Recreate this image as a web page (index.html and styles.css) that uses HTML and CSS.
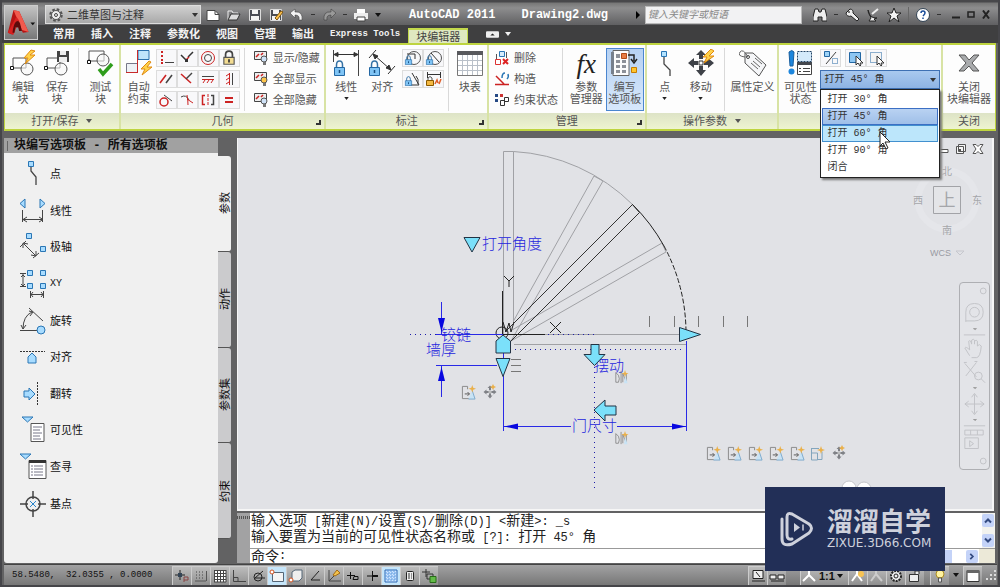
FILE: index.html
```html
<!DOCTYPE html>
<html lang="zh-CN">
<head>
<meta charset="utf-8">
<title>AutoCAD 2011 - Drawing2.dwg</title>
<link rel="stylesheet" href="styles.css">
</head>
<body>
<svg class="sprite" aria-hidden="true">
  <symbol id="down" viewBox="0 0 6 4"><path d="M0 0h6L3 4z" fill="currentColor"/></symbol>
  <symbol id="edit" viewBox="0 0 28 28"><path d="M4 9h13v10H3" fill="none" stroke="#555"/><circle cx="18" cy="20" r="6" fill="#f6f6f6" fill-opacity=".6" stroke="#555"/><path d="M1.500 17.500h3v3h-3z" fill="#fff" stroke="#111"/><path d="M4 9v8" stroke="#555"/><path d="M22 1l-7 8h4l-3 6 10-9h-5l5-4z" fill="#ffd24a" stroke="#e08a10"/></symbol>
  <symbol id="saveb" viewBox="0 0 28 28"><path d="M4 9h13v10H3M4 9v8" fill="none" stroke="#555"/><circle cx="18" cy="20" r="6" fill="#f6f6f6" fill-opacity=".6" stroke="#555"/><path d="M1.500 17.500h3v3h-3z" fill="#fff" stroke="#111"/><path d="M14 2h12v11H14z" fill="#444"/><path d="M17 2h6v4h-6zM16 8h8v5h-8z" fill="#eee"/></symbol>
  <symbol id="test" viewBox="0 0 28 28"><path d="M3 2h15v10H3zM3 10v3" fill="none" stroke="#555"/><circle cx="17" cy="11" r="6" fill="#f6f6f6" fill-opacity=".6" stroke="#555"/><path d="M1.500 11.500h3v3h-3z" fill="#fff" stroke="#111"/><path d="M13 20l4 5 9-10" fill="none" stroke="#2f9d1c" stroke-width="3.500"/></symbol>
  <symbol id="auto" viewBox="0 0 28 28"><path d="M13 1.500h11v9H13z" fill="#bfe4fb" stroke="#2a70ad"/><path d="M1.500 14.500h11v9h-11z" fill="#eef2f6" stroke="#778"/><path d="M12.500 1v23M1 23.500h12" stroke="#c92a2a"/><path d="M24 12l-8 8h4l-3 6 10-8h-5l4-5z" fill="#ffd24a" stroke="#e08a10"/></symbol>
  <symbol id="lock" viewBox="0 0 12 16"><path d="M3 8V5q0-4 3-4t3 4v3" fill="none" stroke="#3572a5" stroke-width="1.500"/><path d="M1 7.500h10v8H1z" fill="#7fc4f5" stroke="#2367a3"/><path d="M6 10v3" stroke="#174e80" stroke-width="1.500"/></symbol>
  <symbol id="glock" viewBox="0 0 14 14"><path d="M4 7V4q0-3 3-3t3 3v3" fill="none" stroke="#444" stroke-width="1.500"/><path d="M2.500 6.500h9v6h-9z" fill="#f3dc92" stroke="#555"/><path d="M7 8v3" stroke="#333" stroke-width="1.500"/></symbol>
  <symbol id="linear" viewBox="0 0 28 28"><path d="M1.500 1v12M26.500 1v26" stroke="#444"/><path d="M2 5.500h24M2 5.500l4-2v4zM26 5.500l-4-2v4z" stroke="#333" fill="#333"/><use href="#lock" x="1" y="11" width="13" height="16"/></symbol>
  <symbol id="aligned" viewBox="0 0 28 28"><path d="M1 9l7-8M20 25l7-8M5 5l18 16M5 5l5 2-3 3zM23 21l-5-2 3-3z" stroke="#333" fill="#333"/><use href="#lock" y="11" width="13" height="16"/></symbol>
  <symbol id="table" viewBox="0 0 28 28"><path d="M1.500 2.500h25v24h-25z" fill="#fff" stroke="#777"/><path d="M1 2h26v4H1z" fill="#58595d"/><path d="M6.500 6v20M11.500 6v20M16.500 6v20M21.500 6v20M2 11.500h24M2 16.500h24M2 21.500h24" stroke="#b9c0c9"/></symbol>
  <symbol id="palette" viewBox="0 0 28 28"><path d="M2 1.500h16v25H2z" fill="#fcfcfc" stroke="#666"/><path d="M0 3h3v22H0z" fill="#77808c"/><path d="M5 5h4v4H5zM5 11h4v3H5zM11 11h4v3h-4zM5 16h4v3H5zM11 16h4v3h-4zM5 21h4v3H5zM11 21h4v3h-4z" fill="#8d9199"/><path d="M10.500 4.500h5v5h-5z" fill="#e77c43" stroke="#b34915"/><path d="M17 6h6v6M20 10l3 4 3-4" fill="none" stroke="#222" stroke-width="1.500"/><path d="M20.500 18.500h5v5h-5z" fill="#ffc52d" stroke="#c67c00"/></symbol>
  <symbol id="point" viewBox="0 0 28 28"><path d="M13 7v8l6 6v6" fill="none" stroke="#444" stroke-width="1.300"/><path d="M10.500 2.500h5v5h-5z" fill="#b5e4ff" stroke="#2a76b5"/></symbol>
  <symbol id="move" viewBox="0 0 28 28"><path d="M14 1l5 5h-3v4h-4V6H9zM14 27l5-6h-3v-4h-4v4H9zM1 14l6-5v3h4v4H7v3zM27 14l-6-5v3h-4v4h4v3z" fill="#3f4248"/><path d="M12 12h4v4h-4z" fill="#fff" stroke="#333"/></symbol>
  <symbol id="movebolt" viewBox="0 0 28 28"><use href="#move"/><path d="M24 0l-8 8h4l-3 6 10-7h-5l5-5z" fill="#ffd24a" stroke="#e08a10"/></symbol>
  <symbol id="tag" viewBox="0 0 28 28"><path d="M6 4l8 0 13 12-7 11L6 14z" fill="#f5f6f8" stroke="#555"/><circle cx="9" cy="8" r="1.500" fill="#fff" stroke="#444"/><path d="M9 8Q4-1 1 3t5 5M12 14l7 6M14 12l7 6M16 9l7 6" fill="none" stroke="#666"/></symbol>
  <symbol id="vis" viewBox="0 0 28 28"><path d="M3 3q3-3 5 0L7 17H4z" fill="#1d86dd" stroke="#1a5f9e"/><circle cx="5.500" cy="22.500" r="3" fill="#1d86dd"/><path d="M11.500 2.500h14v10h-14z" fill="#d4eafb" stroke="#246" stroke-dasharray="2 1"/><path d="M11.500 13.500h14v12h-14z" fill="#fff" stroke="#444"/><path d="M11 13h15v3H11z" fill="#44474d"/><path d="M13 19.500h2M17 19.500h7M13 22.500h2M17 22.500h7" stroke="#444"/></symbol>
  <symbol id="closebig" viewBox="0 0 28 28"><path d="M4 6h6l4 5 5-5h5l-7 8 7 8h-6l-4-5-5 5H4l7-8z" fill="#a9abad" stroke="#555"/></symbol>
  <symbol id="c1" viewBox="0 0 16 16"><path d="M3 1h2v2H3zM3 5h2v2H3zM3 9h2v2H3zM3 12h2v2H3z" fill="#c22"/><path d="M7 12.500h9" stroke="#444"/></symbol>
  <symbol id="c2" viewBox="0 0 16 16"><path d="M2 5l5 5M9 7l5-5" stroke="#333" stroke-width="1.500"/><path d="M7 10l3-3" stroke="#c22" stroke-width="1.500"/><path d="M6 9h3v3H6z" fill="#333"/></symbol>
  <symbol id="c3" viewBox="0 0 16 16"><circle cx="8" cy="8" r="6.500" fill="none" stroke="#c22"/><circle cx="8" cy="8" r="3.500" fill="none" stroke="#444"/></symbol>
  <symbol id="c4" viewBox="0 0 16 16"><path d="M2 12l6-8" stroke="#c22" stroke-width="1.500"/><path d="M8 12l6-8" stroke="#444" stroke-width="1.500"/></symbol>
  <symbol id="c5" viewBox="0 0 16 16"><path d="M2 3l10 9" stroke="#c22" stroke-width="1.500"/><path d="M7 8l6-6" stroke="#444" stroke-width="1.500"/></symbol>
  <symbol id="c6" viewBox="0 0 16 16"><path d="M2 5.500h12" stroke="#444"/><path d="M2 8.500h12M3 12l2-3M7 12l2-3M11 12l2-3" stroke="#c22"/></symbol>
  <symbol id="c7" viewBox="0 0 16 16"><path d="M11.500 2v12" stroke="#444"/><path d="M8.500 2v12M5 5l3-2M5 9l3-2M5 13l3-2" stroke="#c22"/></symbol>
  <symbol id="c8" viewBox="0 0 16 16"><circle cx="6" cy="10" r="4" fill="none" stroke="#c22" stroke-width="1.500"/><path d="M6 3l8 6" stroke="#444"/></symbol>
  <symbol id="c9" viewBox="0 0 16 16"><path d="M2 5q5-3 8 3" fill="none" stroke="#444"/><path d="M8 3q1 5 1 10M8 7l6 4" fill="none" stroke="#c22"/></symbol>
  <symbol id="c10" viewBox="0 0 16 16"><path d="M5 3.500H2.500v9H5" fill="none" stroke="#c22" stroke-width="1.500"/><path d="M11 3.500h2.500v9H11" fill="none" stroke="#444" stroke-width="1.500"/><path d="M8 2v12" stroke="#c22" stroke-dasharray="3 1"/></symbol>
  <symbol id="c11" viewBox="0 0 16 16"><path d="M4 6h8M4 10h8" stroke="#c22" stroke-width="2"/></symbol>
  <symbol id="show" viewBox="0 0 16 16"><path d="M1.500 1.500h12v8h-12z" fill="#eee" stroke="#444"/><path d="M3 7l3-3M8 5l2-2" stroke="#c22" stroke-width="1.500"/><circle cx="11" cy="9" r="3" fill="var(--bulb)" stroke="#555"/><path d="M10 12h3v3h-3z" fill="#777"/></symbol>
  <symbol id="d1" viewBox="0 0 18 16"><path d="M3 4h8v5" fill="none" stroke="#333"/><circle cx="10" cy="8" r="6.500" fill="none" stroke="#555"/><use href="#lock" y="5" width="9" height="10"/></symbol>
  <symbol id="d2" viewBox="0 0 18 16"><circle cx="10" cy="8" r="6.500" fill="none" stroke="#555"/><path d="M6 3l8 9" stroke="#333"/><use href="#lock" y="5" width="9" height="10"/></symbol>
  <symbol id="d3" viewBox="0 0 18 16"><path d="M5 14h10L8 2M12 5q3 3 2 8" fill="none" stroke="#333"/><use href="#lock" y="5" width="9" height="10"/></symbol>
  <symbol id="d4" viewBox="0 0 18 16"><path d="M2.500 1v6M15.500 1v6M2 3.500h13" stroke="#333"/><path d="M3 9V7q2-3 4 0v2" fill="none" stroke="#555"/><path d="M1.500 9.500h7v5h-7z" fill="#f4b942" stroke="#8a5a00"/><path d="M10 13l2-4 1 3M16 8l-2 5" fill="none" stroke="#e0602a" stroke-width="1.500"/></symbol>
  <symbol id="m1" viewBox="0 0 16 16"><path d="M1.500 9.500h5v5h-5z" fill="#fff" stroke="#d33"/><path d="M5.500 1.500h5v5h-5z" fill="#d5ecfb" stroke="#2a76b5"/><path d="M2.500 4v5M12.500 2v6" stroke="#555"/><path d="M9 9l5 5M14 9l-5 5" stroke="#d22" stroke-width="2"/></symbol>
  <symbol id="m2" viewBox="0 0 16 16"><path d="M2 5l8 8M1 13.500h14" stroke="#c22" stroke-width="1.500"/><path d="M8 7q0-5 3-5M14 3q1 3-1 5" fill="none" stroke="#2a76b5" stroke-width="1.500"/></symbol>
  <symbol id="m3" viewBox="0 0 16 16"><path d="M1 2h3v3H1zM1 7h3v3H1z" fill="#264a85"/><path d="M6 2h3v3H6z" fill="#c33"/><path d="M6.500 8.500h4v5h-4zM10.500 5.500h4v4h-4z" fill="#fff" stroke="#333"/></symbol>
  <symbol id="v1" viewBox="0 0 18 16"><path d="M2.500 1.500h5v5h-5z" fill="#9fd4f8" stroke="#2367a3"/><path d="M4 14L14 2" stroke="#444"/><path d="M10.500 8.500h5v5h-5z" fill="none" stroke="#2367a3" stroke-dasharray="1 1"/></symbol>
  <symbol id="v2" viewBox="0 0 18 16"><path d="M2.500 2.500h11v10h-11z" fill="var(--sel)" stroke="#2367a3" stroke-dasharray="var(--dash)"/><path d="M9 6v9l2-2 2 3 1-1-1-2h3z" fill="#fff" stroke="#333"/></symbol>
  <symbol id="newf" viewBox="0 0 14 14"><path d="M1 2.500h8l4 4v6H1z" fill="#fff" stroke="#444"/><path d="M9 2.500v4h4" fill="none" stroke="#444"/></symbol>
  <symbol id="openf" viewBox="0 0 14 14"><path d="M1 12V3h4l1 2h5v2" fill="none" stroke="#eee"/><path d="M1 12l3-6h9l-3 6z" fill="#ddd" stroke="#333"/></symbol>
  <symbol id="savef" viewBox="0 0 14 14"><path d="M1.500 1.500h11v11h-11z" fill="#4a4d55" stroke="#ddd"/><path d="M4 2h6v4H4zM3 8h8v4H3z" fill="#f4f4f4"/></symbol>
  <symbol id="saveas" viewBox="0 0 14 14"><use href="#savef"/><path d="M6 10l6-7 2 1-6 8z" fill="#ffc34d" stroke="#7a5210"/></symbol>
  <symbol id="undo" viewBox="0 0 14 14"><path d="M0 5l5-4v3q8-1 7 8h-3q1-5-4-5v3z" fill="currentColor" stroke="#333" stroke-width=".5"/></symbol>
  <symbol id="print" viewBox="0 0 14 14"><path d="M3 1h8v4H3z" fill="#fff"/><path d="M0 5h14v6H0z" fill="#eee"/><path d="M3 9h8v4H3z" fill="#fff" stroke="#444"/></symbol>
  <symbol id="page" viewBox="0 0 16 16"><path d="M7 1.500H1.500v13H9M7 1.500v3" fill="none" stroke="#888"/><path d="M4 9.500h5M7 7.500l2 2-2 2" fill="none" stroke="#555"/><path d="M12 6l3 9H8" fill="#c8e3f5" stroke="#7ba9cc"/><path d="M12 0l1 3 3 1-3 1-1 3-1-3-3-1 3-1z" fill="#eab04a"/></symbol>
  <symbol id="flip" viewBox="0 0 16 16"><path d="M1.500 3v11h3q2-4 0-8zM7.500 1v14M9.500 14V4l4 10V4" fill="none" stroke="#888"/><path d="M12 6l3 9h-4z" fill="#c8e3f5"/><path d="M12 0l1 3 3 1-3 1-1 3-1-3-3-1 3-1z" fill="#eab04a"/></symbol>
</svg>

<div class="app">
  <header class="head">
    <button class="logo" aria-label="应用程序菜单">
      <svg viewBox="0 0 34 34"><path d="M3 28L9 4l6 1 10 22-6 1-3-6H10l-2 8z" fill="#b81313"/><path d="M9 4l6 1 10 22-7-2-6-14z" fill="#f15a4e"/><path d="M3 28l9-17 3 4-6 15z" fill="#d82020"/><path d="M8 28q1-10 4-12t4 2l2 8h-3l-1-4h-3l-1 6z" fill="#5d0b0b"/><path d="M27 17h5l-2.500 3z" fill="#111"/></svg>
    </button>
    <div class="title">
      <label class="workspace" aria-label="工作空间">
        <svg viewBox="0 0 16 16"><circle cx="8" cy="8" r="5.500" fill="none" stroke="#555" stroke-width="2.500" stroke-dasharray="2.500 1.820"/><circle cx="8" cy="8" r="4.500" fill="#eee" stroke="#555"/><circle cx="8" cy="8" r="1.500" fill="none" stroke="#444"/></svg>
        <select><option>二维草图与注释</option></select>
        <svg class="tri"><use href="#down"/></svg>
      </label>
      <div class="quick">
        <button aria-label="新建"><svg><use href="#newf"/></svg></button>
        <button aria-label="打开"><svg><use href="#openf"/></svg></button>
        <button aria-label="保存"><svg><use href="#savef"/></svg></button>
        <button aria-label="另存为"><svg><use href="#saveas"/></svg></button>
        <button aria-label="放弃"><svg><use href="#undo"/></svg></button>
        <i class="dash"></i>
        <button class="redo" aria-label="重做"><svg><use href="#undo"/></svg></button>
        <i class="dash"></i>
        <button aria-label="打印"><svg><use href="#print"/></svg></button>
        <svg class="tri"><use href="#down"/></svg>
      </div>
      <h1><span>AutoCAD 2011</span><span>Drawing2.dwg</span></h1>
      <svg class="more" viewBox="0 0 4 8"><path d="M0 0l4 4-4 4z"/></svg>
      <input class="search" type="text" placeholder="键入关键字或短语" aria-label="搜索">
      <div class="info">
        <button aria-label="搜索"><svg viewBox="0 0 14 14"><path d="M2 1h3l1 3h2l1-3h3l2 8v4H9V9H5v4H0V9z" fill="#eee" stroke="#222"/></svg></button>
        <i class="dash"></i>
        <button aria-label="速博应用中心"><svg viewBox="0 0 14 14"><path d="M5 1a3.500 3.500 0 0 1 3 4l6 6-2 2-6-5a3.500 3.500 0 0 1-5-3z" fill="#eee" stroke="#222"/><circle cx="4" cy="4" r="1" fill="#555"/></svg></button>
        <button aria-label="通讯中心"><svg viewBox="0 0 14 14"><path d="M2 2q0 8 9 8l-3 1 2 2H3l2-3z" fill="#eee" stroke="#222"/><path d="M6 6l6-5" stroke="#eee" stroke-width="2"/></svg></button>
        <button aria-label="收藏夹"><svg viewBox="0 0 14 14"><path d="M7 0l2 5h5l-4 3 2 6-5-4-5 4 2-6-4-3h5z" fill="#f4f4f4" stroke="#222"/></svg></button>
        <i class="bar"></i>
        <button aria-label="帮助"><svg viewBox="0 0 14 14"><circle cx="7" cy="7" r="6.500" fill="#fff" stroke="#345"/><path d="M5 5q0-2 2-2t2 2q0 1-2 3M7 9.500v1.500" fill="none" stroke="#1a4d9a" stroke-width="1.500"/></svg></button>
        <i class="dash"></i>
      </div>
      <div class="win">
        <button aria-label="最小化"><svg viewBox="0 0 8 8"><path d="M0 7h8" stroke="#222" stroke-width="2"/></svg></button>
        <button aria-label="最大化"><svg viewBox="0 0 8 8"><path d="M1 1.500h6v5H1z" fill="none" stroke="#222" stroke-width="1.500"/></svg></button>
        <button aria-label="关闭"><svg viewBox="0 0 8 8"><path d="M1 0l6 8M7 0L1 8" stroke="#222" stroke-width="2"/></svg></button>
      </div>
    </div>
    <nav class="tabs">
      <button>常用</button><button>插入</button><button>注释</button><button>参数化</button><button>视图</button><button>管理</button><button>输出</button><button class="latin">Express Tools</button><button class="on">块编辑器</button>
      <button class="pill" aria-label="最小化功能区"><svg viewBox="0 0 12 6"><rect width="12" height="6" rx="1" fill="#eee"/><path d="M4 4l2-2 2 2z" fill="#222"/></svg></button>
      <svg class="tri"><use href="#down"/></svg>
    </nav>
  </header>

  <section class="ribbon">
    <div class="panel">
      <div class="tools">
        <button class="big"><svg><use href="#edit"/></svg>编辑<br>块</button>
        <button class="big"><svg><use href="#saveb"/></svg>保存<br>块</button>
        <i class="sep"></i>
        <button class="big full"><svg><use href="#test"/></svg>测试<br>块</button>
      </div>
      <h2>打开/保存 <svg class="tri"><use href="#down"/></svg></h2>
    </div>
    <div class="panel">
      <div class="tools">
        <button class="big"><svg><use href="#auto"/></svg>自动<br>约束</button>
        <div class="cells four">
          <button aria-label="重合"><svg><use href="#c1"/></svg></button><button aria-label="共线"><svg><use href="#c2"/></svg></button><button aria-label="同心"><svg><use href="#c3"/></svg></button><button aria-label="固定"><svg><use href="#glock"/></svg></button>
          <button aria-label="平行"><svg><use href="#c4"/></svg></button><button aria-label="垂直"><svg><use href="#c5"/></svg></button><button aria-label="水平"><svg><use href="#c6"/></svg></button><button aria-label="竖直"><svg><use href="#c7"/></svg></button>
          <button aria-label="相切"><svg><use href="#c8"/></svg></button><button aria-label="平滑"><svg><use href="#c9"/></svg></button><button aria-label="对称"><svg><use href="#c10"/></svg></button><button aria-label="相等"><svg><use href="#c11"/></svg></button>
        </div>
        <i class="sep"></i>
        <div class="rows">
          <button class="b1"><svg><use href="#show"/></svg>显示/隐藏</button>
          <button class="b2"><svg><use href="#show"/></svg>全部显示</button>
          <button class="b3"><svg><use href="#show"/></svg>全部隐藏</button>
        </div>
      </div>
      <h2>几何</h2><button class="launch" aria-label="约束设置"></button>
    </div>
    <div class="panel">
      <div class="tools">
        <button class="big wide"><svg><use href="#linear"/></svg>线性<svg class="tri"><use href="#down"/></svg></button>
        <button class="big"><svg><use href="#aligned"/></svg>对齐</button>
        <div class="cells two">
          <button aria-label="半径"><svg><use href="#d1"/></svg></button><button aria-label="直径"><svg><use href="#d2"/></svg></button>
          <button aria-label="角度"><svg><use href="#d3"/></svg></button><button aria-label="转换"><svg><use href="#d4"/></svg></button>
        </div>
        <i class="sep"></i>
        <button class="big full"><svg><use href="#table"/></svg>块表</button>
      </div>
      <h2>标注</h2><button class="launch" aria-label="标注设置"></button>
    </div>
    <div class="panel">
      <div class="tools">
        <div class="rows">
          <button><svg><use href="#m1"/></svg>删除</button>
          <button><svg><use href="#m2"/></svg>构造</button>
          <button><svg><use href="#m3"/></svg>约束状态</button>
        </div>
        <i class="sep"></i>
        <button class="big full"><span class="fx">fx</span>参数<br>管理器</button>
        <button class="big wide pressed"><svg><use href="#palette"/></svg>编写<br>选项板</button>
      </div>
      <h2>管理</h2><button class="launch" aria-label="管理设置"></button>
    </div>
    <div class="panel">
      <div class="tools">
        <button class="big"><svg><use href="#point"/></svg>点<svg class="tri"><use href="#down"/></svg></button>
        <button class="big wide"><svg><use href="#movebolt"/></svg>移动<svg class="tri"><use href="#down"/></svg></button>
        <i class="sep"></i>
        <button class="big full"><svg><use href="#tag"/></svg>属性定义</button>
      </div>
      <h2>操作参数 <svg class="tri"><use href="#down"/></svg></h2>
    </div>
    <div class="panel">
      <div class="tools">
        <button class="big wider"><svg><use href="#vis"/></svg>可见性<br>状态</button>
        <div class="states">
          <div class="modes">
            <button aria-label="可见性模式"><svg><use href="#v1"/></svg></button>
            <span class="pair"><button class="fill" aria-label="使可见"><svg><use href="#v2"/></svg></button><button class="dotted" aria-label="使不可见"><svg><use href="#v2"/></svg></button></span>
          </div>
          <div class="combo">
            <select aria-label="可见性状态"><option>打开 45° 角</option></select>
            <svg class="tri"><use href="#down"/></svg>
            <ul class="menu" role="listbox" aria-label="可见性状态">
              <li role="option">打开 30° 角</li>
              <li role="option" class="cur" aria-selected="true">打开 45° 角</li>
              <li role="option" class="hot">打开 60° 角</li>
              <li role="option">打开 90° 角</li>
              <li role="option">闭合</li>
            </ul>
            <svg class="pointer" viewBox="0 0 12 19"><path d="M1 1v14l3-3 3 6 2-1-3-6h5z" fill="#fff" stroke="#222"/></svg>
          </div>
        </div>
      </div>
      <h2></h2>
    </div>
    <div class="panel">
      <div class="tools">
        <button class="big full"><svg><use href="#closebig"/></svg>关闭<br>块编辑器</button>
      </div>
      <h2>关闭</h2>
    </div>
  </section>

  <main class="work">
    <aside class="side">
      <h2>块编写选项板<span> - </span>所有选项板</h2>
      <ul class="items">
        <li><button><svg viewBox="0 0 28 28"><path d="M12 7v4l5 6v8" fill="none" stroke="#444" stroke-width="1.300"/><path d="M9.500 1.500h5v5h-5z" fill="#a8dcff" stroke="#2a76b5"/></svg>点</button></li>
        <li><button><svg viewBox="0 0 28 28"><path d="M6 2v9L1 6.500zM21 2v9l5-4.500z" fill="#a8dcff" stroke="#2a76b5"/><path d="M3.500 13v12M23.500 13v12M4 22.500h20M8 20l-4 2.500L8 25M20 20l4 2.500-4 2.500" fill="none" stroke="#444"/></svg>线性</button></li>
        <li><button><svg viewBox="0 0 28 28"><path d="M7.500.5h5v5h-5zM21.500 13.500h5v5h-5z" fill="#a8dcff" stroke="#2a76b5"/><path d="M1 14l6-6M14 25l6-5M4 10l13 13M4 10v5M4 10l5 1M17 23v-5M17 23l-5-1" fill="none" stroke="#444"/></svg>极轴</button></li>
        <li><button><svg viewBox="0 0 28 28"><path d="M8.500.5h5v5h-5zM21.500.5h5v5h-5zM8.500 13.500h5v5h-5zM21.500 13.500h5v5h-5z" fill="#a8dcff" stroke="#2a76b5"/><path d="M1 3.500h6M1 16.500h6M4 4v12M2 7l2-2 2 2M2 14l2 2 2-2M11.500 21v7M24.500 21v7M12 24.500h12M14 22l-2 2.500 2 2.500M22 22l2 2.500-2 2.500" fill="none" stroke="#444"/></svg><span class="latin">XY</span></button></li>
        <li><button><svg viewBox="0 0 28 28"><path d="M1 23.500h20M10 1l14 13M4 22Q4 9 13 5M2 18l2 4 3-4M10 4l4 1-3 4" fill="none" stroke="#444"/><circle cx="22" cy="23" r="4" fill="#a8dcff" stroke="#2a76b5"/></svg>旋转</button></li>
        <li><button><svg viewBox="0 0 28 28"><path d="M1 8.500h25" stroke="#333" stroke-dasharray="2 1"/><path d="M9 20v-6l4-4 4 4v6z" fill="#a8dcff" stroke="#2a76b5"/></svg>对齐</button></li>
        <li><button><svg viewBox="0 0 28 28"><path d="M5 11h5V8l6 6-6 6v-3H5z" fill="#a8dcff" stroke="#2a76b5"/><path d="M18.500 2v24" stroke="#333" stroke-dasharray="2 1"/></svg>翻转</button></li>
        <li><button><svg viewBox="0 0 28 28"><path d="M3 1h11L8.500 6z" fill="#a8dcff" stroke="#2a76b5"/><path d="M12 7.500h13v18H12z" fill="#fff" stroke="#555"/><path d="M14 11h9M14 14h7M14 17h9M14 20h7M14 23h8" stroke="#778"/></svg>可见性</button></li>
        <li><button><svg viewBox="0 0 28 28"><path d="M1 1h11L6.500 6z" fill="#a8dcff" stroke="#2a76b5"/><path d="M10 7.500h17v18H10z" fill="#fff" stroke="#555"/><path d="M10 7h17v3H10z" fill="#333"/><path d="M12 13h2M15 13h9M12 16h2M15 16h9M12 19h2M15 19h9M12 22h2M15 22h9" stroke="#778"/></svg>查寻</button></li>
        <li><button><svg viewBox="0 0 28 28"><path d="M14 1v8M14 19v8M1 14h8M19 14h8" stroke="#444" stroke-width="1.500"/><circle cx="14" cy="14" r="7" fill="none" stroke="#444" stroke-width="1.500"/><path d="M11 11l6 6M17 11l-6 6" stroke="#2a86cc"/></svg>基点</button></li>
      </ul>
    </aside>
    <div class="vtabs">
      <button class="on"><span>参数</span></button><button><span>动作</span></button><button><span>参数集</span></button><button><span>约束</span></button>
    </div>
    <div class="center">
      <section class="canvas">
        <svg class="drawing" viewBox="238 138 754 368" preserveAspectRatio="xMinYMin meet">
          <g fill="none" stroke="#a0a1a5">
            <path d="M503.500 334V151.500h10V325M513.500 151.500A183 183 0 0 1 633 205M513.500 321L594 176l9 5-92 160M512 330l150-87 4 9-155 89M503 334.500h183M514 344.500h172"/>
            <path d="M649.500 316v11M674.500 316v11M698.500 316v11M723.500 316v11M747.500 316v11M511 359.500h10M511 365.500h10M511 371.500h10" stroke="#777"/>
            <path d="M505 332L632.500 204.500l7 8L510 342" stroke="#333"/>
            <path d="M632.500 204.500A183 183 0 0 1 664 246" stroke="#222"/>
            <path d="M664 246A183 183 0 0 1 686 334" stroke="#222" stroke-dasharray="5 2"/>
            <path d="M502.500 291v43.500h42.500M504 276l5 5 5-5M509 281v6M550 322l11 11M561 322l-11 11M503 322l3 10 3-9 2 9 3-10" stroke="#222"/>
            <circle cx="502" cy="333" r="6" stroke="#222"/>
            <path d="M410 334.500h26M548 334.500h46M515 349.500h168M594.500 367v122" stroke="#1c1ca8" stroke-dasharray="1 4"/>
            <path d="M441.500 302v32M436 334.500h67M436 365.500h61M441.500 365v32M503.500 345v86M686.500 341v90M503 426.500h68M617 426.500h69" stroke="#2929e6"/>
          </g>
          <path d="M438 318h7l-3.500 14zM438 381h7l-3.500-14zM504 426.500l14-3v6zM686 426.500l-14-3v6z" fill="#0808e0"/>
          <g class="cad-text"><text x="482" y="249">打开角度</text><text x="441" y="340">铰链</text><text x="426" y="355">墙厚</text><text x="572" y="431">门尺寸</text><text x="594" y="371">摆动</text></g>
          <path d="M464 237.500h16l-8 14.500zM496 353v-12l7-6 7.500 6v12zM496 358.500h14l-7 18zM679.500 327.500l21 7-21 7zM591 344.500h8v10h6l-10.500 11-10.500-11h7zM594 410l11-10v6h11v9h-11v6z" fill="#7be0fa" stroke="#234"/>
          <use href="#page" x="461" y="385" width="15" height="15"/>
          <use href="#move" class="faint" x="483" y="385" width="14" height="14"/><path d="M493 384l1 2 2 1-2 1-1 2-1-2-2-1 2-1z" fill="#eab04a"/>
          <use href="#flip" x="614" y="370" width="15" height="14"/><use href="#flip" x="614" y="431" width="15" height="14"/>
          <use href="#page" x="706" y="446" width="15" height="15"/><use href="#page" x="727" y="446" width="15" height="15"/><use href="#page" x="748" y="446" width="15" height="15"/><use href="#page" x="769" y="446" width="15" height="15"/><use href="#page" x="790" y="446" width="15" height="15"/>
          <path d="M811 448.500h8M811.500 448v12h6v-7h-6M818 459.500h4v-8" fill="none" stroke="#83a5bd"/><path d="M821 446l1 3 3 1-3 1-1 3-1-3-3-1 3-1z" fill="#eab04a"/>
          <use href="#move" class="faint" x="832" y="446" width="14" height="14"/><path d="M842 445l1 2 2 1-2 1-1 2-1-2-2-1 2-1z" fill="#eab04a"/>
        </svg>
        <div class="doc">
          <button aria-label="最小化"><svg viewBox="0 0 12 12"><path d="M1 6.500h9v3H1z" fill="#fff" stroke="#555"/></svg></button>
          <button aria-label="还原"><svg viewBox="0 0 12 12"><path d="M3.500 1.500h7v7h-7zM1.500 3.500h7v7h-7z" fill="#f6f6f6" stroke="#555"/><path d="M4 6h2v2H4z" fill="#555"/></svg></button>
          <button aria-label="关闭"><svg viewBox="0 0 12 12"><path d="M1 1.500h3l2 2 2-2h3L8 6l3 4.500H8l-2-2-2 2H1L4 6z" fill="#fff" stroke="#555"/></svg></button>
        </div>
        <div class="cube">
          <svg viewBox="0 0 74 96" aria-label="ViewCube"><circle cx="36" cy="37" r="29" fill="none" stroke="#e5e6ea" stroke-width="7"/><path d="M22.500 23.500h27v27h-27z" fill="#e4e5e8" stroke="#a2a3a7"/><g fill="#a5a6aa" text-anchor="middle" font-size="10"><text x="36" y="12">北</text><text x="7" y="41">西</text><text x="66" y="41">东</text><text x="36" y="71">南</text><text x="36" y="43" font-size="17">上</text></g><text x="19" y="93" class="wcs">WCS</text><path d="M45 88h8l-4 4z" fill="none" stroke="#c6c7cd"/></svg>
        </div>
        <div class="navbar">
          <svg viewBox="0 0 30 188" fill="none" stroke="#c2c3c7"><circle cx="24" cy="6" r="3"/><path d="M6 38V28q0-9 9-9t9 9-9 9H6"/><circle cx="15" cy="28" r="5"/><path d="M4 51.500h22M10 73l-5-8q1-2 5 2l-1-9q2-2 3 3V57q2-2 3 0v4-3q2-2 3 0v5q2-3 4 0-1 12-5 12h-5M5 81l12 14M17 80L6 94"/><circle cx="19" cy="94" r="4"/><path d="M22 97l4 4M4 80h3M15 79h3M15 113v20M6 123h18M12 116l3-4 3 4M12 130l3 4 3-4M9 120l-4 3 4 3M21 120l4 3-4 3M4 145.500h22M5 150h19v5H5zM11 150v5M18 150v5M5 158h14v11H5zM10 161l4 3-4 3z"/><circle cx="24" cy="182" r="3"/><path d="M14 45h3l-1 1zM14 106h3l-1 1zM14 139h3l-1 1z" stroke="#999"/></svg>
        </div>
        <svg class="bubbles" viewBox="0 0 32 16"><circle cx="8" cy="9" r="7" fill="#fff" stroke="#c5c6ca"/><circle cx="23" cy="10" r="7" fill="#fff" stroke="#c5c6ca"/></svg>
      </section>
      <section class="command">
        <div class="handle"></div>
        <div class="log">
          <p>输入选项<span> [</span>新建<span>(N)/</span>设置<span>(S)/</span>删除<span>(D)] &lt;</span>新建<span>&gt;: _s</span></p>
          <p>输入要置为当前的可见性状态名称或<span> [?]: </span>打开<span> 45° </span>角</p>
        </div>
        <div class="vscroll"><button aria-label="向上"><svg viewBox="0 0 8 6"><path d="M1 5l3-3 3 3"/></svg></button><button aria-label="向下"><svg viewBox="0 0 8 6"><path d="M1 1l3 3 3-3"/></svg></button></div>
        <label class="prompt">命令<span>:</span><input type="text" aria-label="命令行"></label>
        <div class="hscroll"><i></i><button aria-label="向右"><svg viewBox="0 0 6 8"><path d="M1 1l3 3-3 3"/></svg></button></div>
      </section>
    </div>
  </main>

  <footer class="status">
    <output>58.5480,&nbsp; 32.0355 , 0.0000</output>
    <div class="toggles">
      <button aria-label="推断约束"><svg viewBox="0 0 16 16"><path d="M1 7h10M6 2v10" stroke="#222"/><path d="M4 5h4v4H4z" fill="#345"/><path d="M10 14V9h4v3h-4" fill="none" stroke="#844"/></svg></button>
      <button aria-label="捕捉"><svg viewBox="0 0 16 16"><path d="M3 4h8M3 7h8M3 10h8" stroke="#444" stroke-dasharray="1 2"/><path d="M2 13h11M13.500 3v10" stroke="#555"/></svg></button>
      <button aria-label="栅格"><svg viewBox="0 0 16 16"><path d="M2 2h12v12H2z" fill="#fff"/><path d="M2.500 2v12M5.500 2v12M8.500 2v12M11.500 2v12M14 2v12M2 2.500h12M2 5.500h12M2 8.500h12M2 11.500h12M2 14h12" stroke="#444"/></svg></button>
      <button aria-label="正交"><svg viewBox="0 0 16 16"><path d="M2.500 2v11.500H15M2 9.500h5V13" fill="none" stroke="#444"/></svg></button>
      <button aria-label="极轴"><svg viewBox="0 0 16 16"><path d="M13 3L5 10h10" fill="none" stroke="#222"/><circle cx="8" cy="9" r="4" fill="none" stroke="#222"/></svg></button>
      <button class="on" aria-label="对象捕捉"><svg viewBox="0 0 16 16"><path d="M3.500 4.500h11v9h-11z" fill="#f4f4f4" stroke="#567"/><circle cx="3" cy="4" r="2" fill="#fff" stroke="#d4511e"/></svg></button>
      <button aria-label="三维对象捕捉"><svg viewBox="0 0 16 16"><path d="M4 4l3-2h7v8l-3 3H4z" fill="#eee" stroke="#567"/><circle cx="3" cy="12" r="2" fill="#fff" stroke="#d4511e"/></svg></button>
      <button aria-label="对象追踪"><svg viewBox="0 0 16 16"><path d="M12 3L4 12h9" fill="none" stroke="#222"/></svg></button>
      <button aria-label="动态 UCS"><svg viewBox="0 0 16 16"><path d="M3 2v11h12M3 13l6-6" fill="none" stroke="#444"/><path d="M7 7l4-5 3 3-5 3z" fill="#f3c24d" stroke="#a36b12"/></svg></button>
      <button aria-label="动态输入"><svg viewBox="0 0 16 16"><path d="M2 7.500h8M5.500 4v7M9 8.500h4v3H8z" fill="none" stroke="#111"/></svg></button>
      <button aria-label="线宽"><svg viewBox="0 0 16 16"><path d="M8 8h6" stroke="#111" stroke-width="2"/><path d="M3 8h6M8.500 3v10" stroke="#111"/></svg></button>
      <button class="on" aria-label="透明度"><svg viewBox="0 0 16 16"><path d="M2 2h12v12H2z" fill="#cfe6ff" stroke="#2c68b4"/><path d="M2 5h12M2 8h12M2 11h12M5 2v12M8 2v12M11 2v12" stroke="#5f9be0" stroke-dasharray="2 1"/></svg></button>
      <button aria-label="快捷特性"><svg viewBox="0 0 16 16"><rect x="4.500" y="3.500" width="7" height="9" rx="1" fill="#eee" stroke="#222"/><path d="M6 6h4M6 8h4M6 10h4" stroke="#333" stroke-dasharray="2 1"/></svg></button>
      <button aria-label="选择循环"><svg viewBox="0 0 16 16"><path d="M1 4h8M5 1v8M6 6h6v5H6z" fill="none" stroke="#333"/><path d="M9 8.500h6v6H9z" fill="#62bb48" stroke="#286b19"/></svg></button>
    </div>
    <div class="right">
      <button aria-label="模型"><svg viewBox="0 0 16 16"><path d="M3 2.500h10v8H3z" fill="#eee" stroke="#222"/><path d="M2 13h13M6 4l4 5" stroke="#222"/></svg></button>
      <button aria-label="布局"><svg viewBox="0 0 16 16"><path d="M1 7h6v4H1zM9 7h6v4H9z" fill="#eee" stroke="#222"/><path d="M2 13h13" stroke="#222"/></svg></button>
      <button class="scale"><svg viewBox="0 0 16 16"><path d="M8 2v5l-6 6M8 7l6 6" fill="none" stroke="#fff" stroke-width="2"/></svg>1:1<svg class="tri"><use href="#down"/></svg></button>
      <button aria-label="注释可见性"><svg viewBox="0 0 16 16"><path d="M7 2v4l-5 7M7 6l5 7" fill="none" stroke="#fff" stroke-width="2"/><circle cx="11" cy="6" r="3" fill="#f7c353"/></svg></button>
      <button aria-label="自动缩放"><svg viewBox="0 0 16 16"><path d="M7 2v4l-5 7M7 6l6 7" fill="none" stroke="#ccc" stroke-width="2"/></svg></button>
      <button aria-label="切换工作空间"><svg viewBox="0 0 16 16"><circle cx="8" cy="8" r="5" fill="#eee" stroke="#222" stroke-width="2" stroke-dasharray="2 1"/><circle cx="8" cy="8" r="2" fill="none" stroke="#222"/></svg></button>
      <button aria-label="锁定"><svg viewBox="0 0 16 16"><path d="M2.500 6.500h9v7h-9zM8 6V3h4v3" fill="#eee" stroke="#333"/></svg></button>
      <button class="bulb" aria-label="硬件加速"><svg viewBox="0 0 16 16"><circle cx="8" cy="6" r="4" fill="#fff3a0" stroke="#a98a20"/><path d="M6.500 10h3v4h-3z" fill="#eee" stroke="#555"/></svg></button>
      <svg class="tri"><use href="#down"/></svg>
      <button aria-label="全屏显示"><svg viewBox="0 0 16 16"><path d="M2 2.500h12v11H2z" fill="#fff" stroke="#333"/><path d="M2 2h12v3H2z" fill="#666"/></svg></button>
      <svg class="grip" viewBox="0 0 12 12"><path d="M9 1h2v2H9zM5 5h2v2H5zM9 5h2v2H9zM1 9h2v2H1zM5 9h2v2H5zM9 9h2v2H9z" fill="#ddd"/></svg>
    </div>
  </footer>

  <aside class="brand">
    <svg viewBox="0 0 34 36" fill="none" stroke="#ced1dc" stroke-width="3" stroke-linejoin="round" stroke-linecap="round"><path d="M12 28q-5 1-5-4V6q0-5 5-3l17 10q5 4 0 9L12 33q-10 3-10-5V8"/><path d="M14 12v9l6-4.500z" fill="#ced1dc" stroke="none"/><path d="M23 14v5" stroke-width="1.500"/></svg>
    <div><strong>溜溜自学</strong><small>ZIXUE.3D66.COM</small></div>
  </aside>
</div>
</body>
</html>
```

FILE: styles.css
```css
* { box-sizing: border-box; }
body { margin: 0; font: 11px/12px "Liberation Sans", "Noto Sans CJK SC", sans-serif; color: #333; }
button, select, input { margin: 0; padding: 0; border: 0; background: none; font: inherit; color: inherit; }
select { appearance: none; }
button svg, .workspace svg { display: block; }
h1, h2, p, ul { margin: 0; padding: 0; list-style: none; font-weight: normal; }
.sprite { position: absolute; width: 0; height: 0; }
.latin { font-family: "Liberation Mono", monospace; font-size: 9px; }
.tri { width: 6px; height: 4px; flex: none; }

.app { position: relative; min-height: 100vh; display: flex; flex-direction: column; background: #626263; border: solid #454549; border-width: 0 2px 2px; }

/* title bar and ribbon tabs */
.head { display: grid; grid-template: 25px 18px / 34px minmax(0, 1fr); column-gap: 7px; padding: 0 4px 0 2px; background: linear-gradient(#48484b 0 2px, #777 3px, #8d8d8e 8px, #606062 25px, #3f3f40 25px); }
.logo { grid-row: 1 / 3; margin: 5px 0 3px; background: linear-gradient(#c4c4c4, #777); border: 1px solid #ccc; }
.logo svg { width: 32px; height: 33px; }
.title { display: flex; align-items: center; gap: 5px; padding-top: 4px; min-width: 0; }
.workspace { display: flex; align-items: center; flex: none; width: 156px; height: 19px; gap: 3px; padding: 0 2px; background: linear-gradient(#d0d0d0, #a9a9a9); border: 1px solid #ddd; }
.workspace svg:first-child { width: 16px; height: 16px; }
.workspace select { flex: 1; font-size: 11px; color: #333; }
.quick, .info, .win { display: flex; align-items: center; gap: 7px; flex: none; }
.quick svg:not(.tri), .info svg { width: 14px; height: 14px; color: #f4f4f4; }
.quick .redo { transform: scaleX(-1); }
.quick .redo svg:not(.tri) { color: #999; }
.quick .tri { color: #111; }
.dash { width: 4px; height: 1px; background: #333; }
.bar { width: 1px; height: 16px; background: #666; }
h1 { flex: 1; display: flex; justify-content: center; gap: 26px; font: bold 12px/14px "Liberation Mono", monospace; color: #fff; white-space: nowrap; }
.more { width: 4px; height: 8px; flex: none; }
.search { flex: 0 1 157px; min-width: 60px; height: 18px; padding: 0 2px; background: #f2f2f3; font-style: italic; font-size: 10px; border: 1px solid #bbb; }
.search::placeholder { color: #888; }
.info { margin-left: 6px; }
.win { margin-left: 6px; margin-right: 4px; }
.win svg { width: 8px; height: 9px; }
.tabs { display: flex; align-items: stretch; color: #f2f2f2; font-weight: bold; }
.tabs button { padding: 0 8px; white-space: nowrap; font-weight: bold; }
.tabs .on { margin-top: 3px; color: #444; background: #dfe8c0; border: solid #c3d94c; border-width: 2px 1px 0; font-weight: normal; padding: 0 7px; }
.tabs .pill { margin-left: 12px; padding: 0 6px; }
.pill svg { width: 13px; height: 7px; }
.tabs .tri { align-self: center; }

/* ribbon */
.ribbon { display: grid; grid-template-columns: 116fr 206fr 163fr 158fr 133fr 164fr 52fr; margin: 0 2px; border: solid #bed43f; border-width: 2px 1px; background: #fdfdfd; }
.panel { position: relative; display: flex; flex-direction: column; min-width: 0; border-right: 2px solid #d8e3a4; }
.panel:last-child { border-right: 0; }
.tools { display: flex; height: 68px; padding: 3px 1px 2px; }
.panel h2 { display: flex; align-items: center; justify-content: center; gap: 8px; height: 16px; font-size: 11px; background: linear-gradient(#dde3c6, #eef4d0); color: #555; }
.big { display: flex; flex-direction: column; align-items: center; flex: none; width: 34px; padding: 1px 0; color: #555; white-space: nowrap; }
.big > svg:first-child { width: 28px; height: 28px; margin-bottom: 4px; flex: none; }
.big .tri { margin-top: 4px; color: #222; width: 5px; height: 3px; }
.wide { width: 38px; }
.wider { width: 40px; }
.full { flex: 1; }
.pressed { background: linear-gradient(#b6d1f2, #d7e8fb); border: 1px solid #4b86cf; padding: 0; }
.fx { height: 32px; font: italic 27px/30px "Liberation Serif", serif; color: #222; }
.sep { width: 1px; margin: 0 4px; background: #d9d9d9; flex: none; }
.cells { display: grid; grid-auto-rows: 18px; row-gap: 3px; align-content: start; padding-top: 1px; }
.four { grid-template-columns: repeat(4, 21px); }
.two { grid-template-columns: repeat(2, 21px); margin-left: 3px; }
.cells button, .modes button { display: grid; place-items: center; background: #f8f8fa; border: 1px solid #ddd; }
.cells svg { width: 16px; height: 16px; }
.cells.two svg { width: 18px; height: 16px; }
.rows { display: flex; flex-direction: column; justify-content: space-between; padding: 2px 0 3px 4px; }
.rows button { display: flex; align-items: center; gap: 4px; height: 16px; color: #555; white-space: nowrap; }
.rows svg { width: 16px; height: 16px; }
.b1, .b3 { --bulb: #cfe2f7; }
.b2 { --bulb: #ffc64a; }
.launch { position: absolute; right: 3px; bottom: 4px; width: 5px; height: 5px; border: solid #333; border-width: 0 2px 2px 0; }
.states { flex: 1; min-width: 0; padding-top: 1px; }
.modes { display: flex; gap: 4px; height: 21px; }
.modes button { width: 21px; height: 18px; }
.pair { display: flex; }
.modes svg { width: 18px; height: 16px; }
.fill { --sel: #8dc6f2; --dash: none; }
.dotted { --sel: #f4f4f4; --dash: 1 1; }
.combo { position: relative; display: flex; align-items: center; height: 19px; background: linear-gradient(#a9c9ef, #8eb4e4); border: 1px solid #3e70b3; padding-right: 3px; }
.combo select, .menu { font-family: "Liberation Mono", "Noto Sans CJK SC", monospace; font-size: 10px; color: #333; }
.combo select { flex: 1; height: 17px; padding-left: 3px; }
.menu { position: absolute; z-index: 3; top: 18px; left: -1px; right: -1px; padding: 1px; background: #fff; border: 1px solid #222; box-shadow: 2px 2px 2px #777; }
.menu li { height: 17px; line-height: 15px; padding: 0 4px; border: 1px solid transparent; }
.menu .cur { background: linear-gradient(#b9d2f2, #9fbfe8); border-color: #3c6fc4; }
.menu .hot { background: #bce6fb; border-color: #4290cf; }
.pointer { position: absolute; z-index: 4; left: 58px; top: 60px; width: 12px; height: 19px; }

/* palette */
.work { flex: 1; display: flex; padding: 7px 3px 1px 2px; min-height: 0; }
.side { flex: 0 0 214px; display: flex; flex-direction: column; }
.side h2 { height: 15px; padding-left: 10px; font-size: 12px; line-height: 15px; font-weight: bold; color: #111; background: linear-gradient(90deg, #666 1px, transparent 1px) 3px 3px / 2px 10px no-repeat, #a1a1a1; white-space: nowrap; }
.side h2 span { font-family: "Liberation Mono", monospace; }
.items { flex: 1; display: grid; grid-template-rows: repeat(10, 1fr); padding: 3px 15px 41px; background: #f0f0f0; border-radius: 0 0 3px 3px; }
.items li { display: flex; }
.items button { display: flex; align-items: center; gap: 3px; color: #111; }
.items svg { width: 28px; height: 28px; }
.items .latin { font-size: 10px; }
.vtabs { width: 13px; flex: none; display: grid; grid-template-rows: repeat(4, 1fr); padding: 18px 0 24px; }
.vtabs button { display: grid; place-items: center; background: #cbcbcd; border-bottom: 1px solid #555; border-radius: 0 3px 3px 0; color: #111; }
.vtabs .on { background: #f0f0f0; }
.vtabs span { writing-mode: vertical-rl; text-orientation: sideways; transform: rotate(180deg); }

/* drawing area */
.center { flex: 1; min-width: 0; display: flex; flex-direction: column; margin-left: 6px; }
.canvas { flex: 1; min-height: 0; position: relative; margin-right: 1px; background: #e1e2e6; border: solid #f6f6f6; border-width: 0 2px 2px 1px; }
.drawing { display: block; width: 100%; height: 100%; position: absolute; }
.cad-text { font: 15px "Noto Sans CJK SC", sans-serif; font-weight: 300; fill: #2525dd; }
.faint { opacity: .6; }
.doc { position: absolute; top: 5px; right: 8px; display: flex; gap: 5px; }
.doc svg { width: 12px; height: 12px; }
.cube { position: absolute; top: 25px; right: 7px; }
.cube svg { width: 74px; height: 96px; }
.wcs { font-size: 9px; fill: #999aa3; }
.navbar { position: absolute; top: 144px; right: 2px; border: 1px solid #aeafb3; border-radius: 4px; background: #e3e4e8; }
.navbar svg { display: block; width: 29px; height: 186px; }
.bubbles { position: absolute; bottom: 14px; right: 119px; width: 32px; height: 16px; }

/* command window */
.command { margin-top: 2px; display: grid; grid-template: 35px 15px / 13px minmax(0, 1fr) auto 13px; background: #fff; }
.handle { grid-row: 1 / 3; background: linear-gradient(90deg, #555 1px, transparent 1px) 2px 3px / 2px 3px repeat-x, #a2a2a3; }
.log { grid-column: 2 / 4; padding: 0 1px; color: #222; }
.log p { font-size: 14px; line-height: 14px; white-space: nowrap; overflow: hidden; }
.log span { font: 12px/14px "Liberation Mono", monospace; white-space: pre; }
.vscroll { display: flex; flex-direction: column; justify-content: space-between; background: #f3f3ee; padding: 1px 0; }
.vscroll button, .hscroll button { display: grid; place-items: center; width: 12px; height: 13px; border-radius: 2px; background: #c4d3f8; }
.command button svg { width: 8px; height: 7px; fill: none; stroke: #334a80; stroke-width: 2; }
.prompt { grid-column: 2; display: flex; align-items: center; border-top: 1px solid #999; font-size: 14px; line-height: 14px; color: #222; padding-left: 1px; }
.prompt span { font: 12px/14px "Liberation Mono", monospace; }
.prompt input { flex: 1; min-width: 0; height: 13px; }
.hscroll { grid-column: 3 / 5; display: flex; align-items: center; gap: 14px; padding-right: 17px; border-top: 1px solid #999; background: linear-gradient(90deg, #fff 35px, #ece9d8 35px); }
.hscroll i { width: 8px; height: 13px; background: #c4d3f8; }

/* status bar */
.status { display: flex; align-items: center; height: 21px; margin: 0 1px 0 2px; background: linear-gradient(#a2a2a3, #777); border-top: 1px solid #444; color: #111; }
.status output { width: 168px; padding-left: 8px; font: 9px/12px "Liberation Mono", monospace; white-space: nowrap; flex: none; }
.toggles, .right { display: flex; align-items: center; height: 100%; }
.status button { display: grid; place-items: center; width: 19px; height: 19px; border: solid #ccc; border-width: 1px 0 0 1px; background: linear-gradient(#bcbcbc, #8f8f8f); }
.status button svg:not(.tri) { width: 16px; height: 16px; }
.status .on { background: #c5e5fa; }
.right { margin-left: auto; }
.status .scale { display: flex; align-items: center; gap: 2px; width: 48px; margin-left: 14px; font-weight: bold; }
.right .bulb { margin-left: 6px; }
.right > .tri { margin: 0 4px; }
.grip { width: 12px; height: 12px; margin-left: 3px; }

.brand { position: absolute; z-index: 5; right: 53px; bottom: 14px; display: flex; align-items: center; gap: 13px; width: 180px; height: 84px; padding-left: 15px; background: #222f57; color: #ced1dc; }
.brand svg { width: 34px; height: 36px; }
.brand strong { display: block; font-size: 26px; line-height: 28px; font-weight: bold; white-space: nowrap; }
.brand small { display: block; font: 12px/14px "DejaVu Sans", sans-serif; }
```
